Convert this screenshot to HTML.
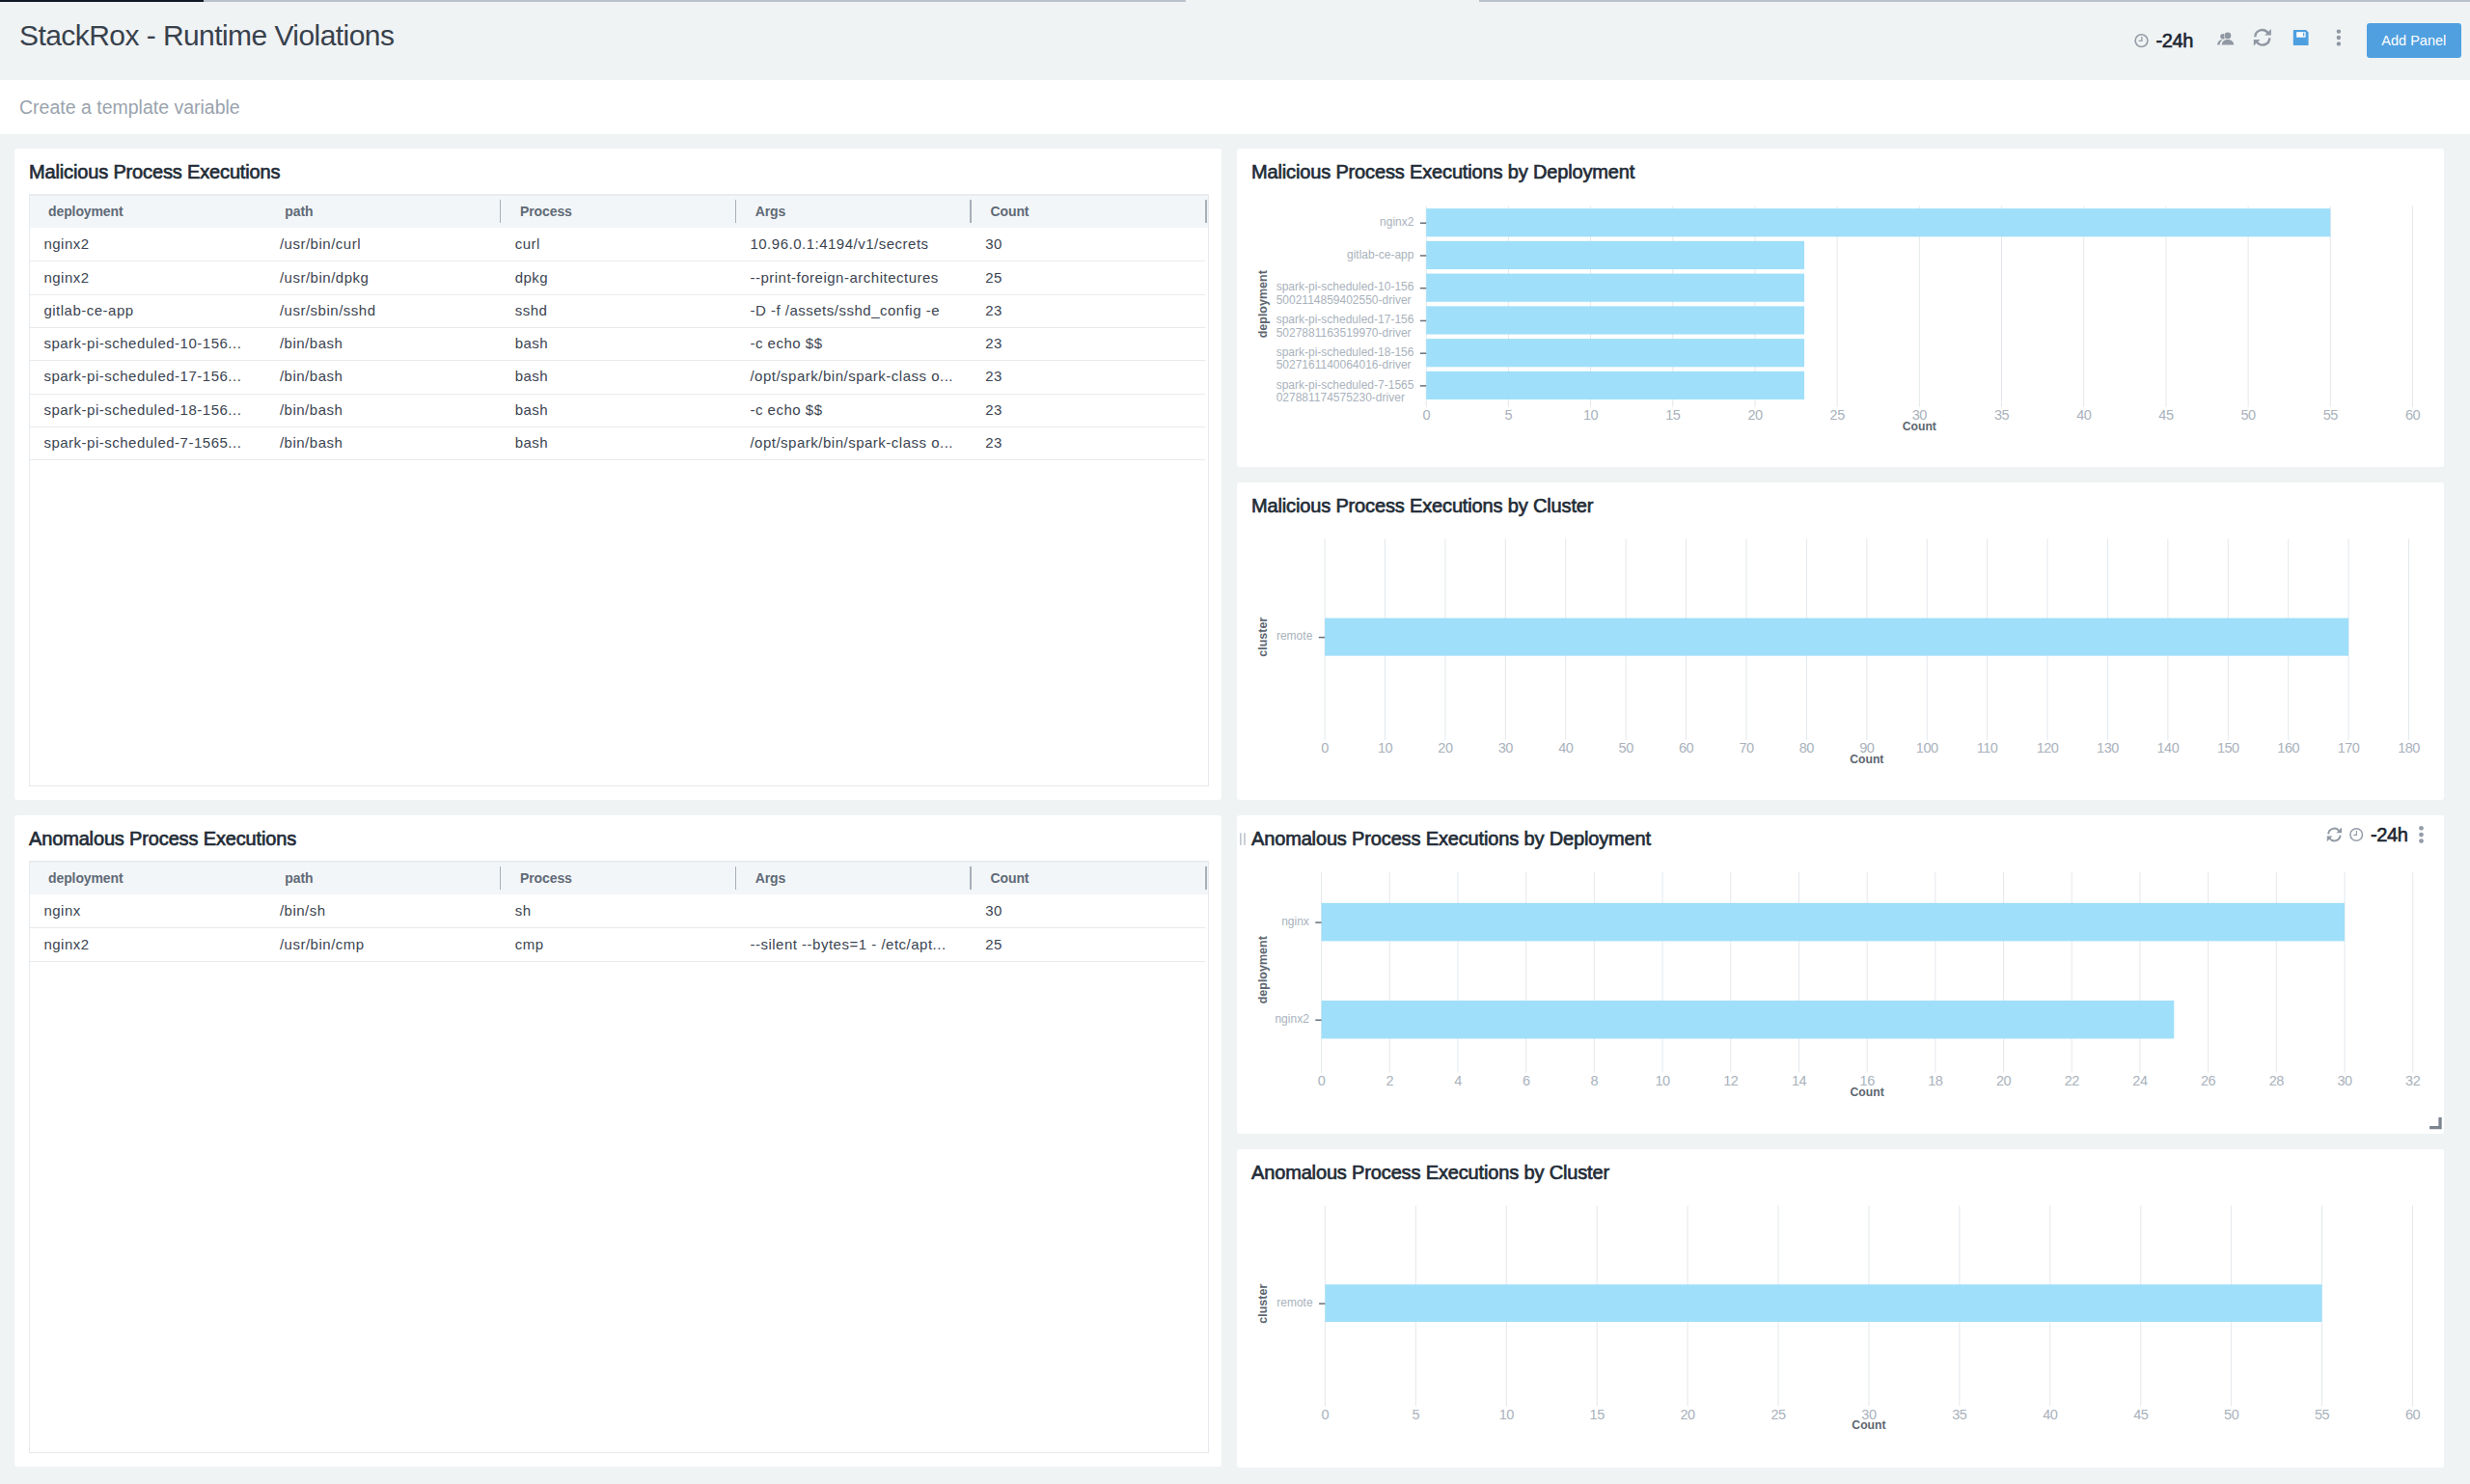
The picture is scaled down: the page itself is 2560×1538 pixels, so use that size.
<!DOCTYPE html><html><head><meta charset="utf-8"><style>
html,body{margin:0;padding:0;width:2560px;height:1538px;overflow:hidden;background:#f0f3f4;font-family:"Liberation Sans", sans-serif;}
.t{position:absolute;white-space:nowrap;line-height:1;}
.r{position:absolute;}
svg{position:absolute;left:0;top:0;}
</style></head><body>
<div class="r" style="left:0.00px;top:0.00px;width:211.00px;height:2.00px;background:#0f1a26;"></div>
<div class="r" style="left:211.00px;top:0.00px;width:1018.00px;height:2.00px;background:#b9c2cc;"></div>
<div class="r" style="left:1533.00px;top:0.00px;width:1027.00px;height:2.00px;background:#b9c2cc;"></div>
<div class="t" style="top:22.20px;font-size:30px;color:#38414c;letter-spacing:-0.56px;left:20.00px;">StackRox - Runtime Violations</div>
<div class="r" style="left:0.00px;top:83.00px;width:2560.00px;height:56.00px;background:#ffffff;"></div>
<div class="t" style="top:102.19px;font-size:19.5px;color:#9aa3ad;left:20.00px;">Create a template variable</div>
<div class="t" style="top:32.07px;font-size:20px;color:#1b2430;-webkit-text-stroke:0.6px #1b2430;letter-spacing:-0.4px;left:2234.50px;">-24h</div>
<svg width="2560" height="83" viewBox="0 0 2560 83">
<g fill="none" stroke="#959da8">
<circle cx="2219.5" cy="42.1" r="6.4" stroke-width="1.6"/>
<path d="M2219.9 38 V42.4 H2216.6" stroke-width="1.3"/>
</g>
<g fill="#8f98a3">
<circle cx="2304.0" cy="37.8" r="2.8"/>
<path d="M2297.9 46.6 C2298.4 43.5 2300 41.6 2302.6 41.3 L2303.6 41.3 C2301.6 42.8 2300.8 44.6 2300.6 46.6 Z"/>
<g stroke="#f0f3f4" stroke-width="1.1" style="paint-order:stroke">
<circle cx="2308.9" cy="36.9" r="3.4"/>
<path d="M2302.7 46.6 C2302.9 43.2 2305.2 41.1 2308.9 41.1 C2312.6 41.1 2315 43.2 2315.2 46.6 Z"/>
</g>
</g>
<g fill="none" stroke="#8f98a3" stroke-width="2.4">
<path d="M2337.3 38.2 A7.3 7.3 0 0 1 2350.6 34.2"/>
<path d="M2352.3 39.4 A7.3 7.3 0 0 1 2339.0 43.4"/>
</g>
<g fill="#8f98a3">
<path d="M2353.9 30 V36.6 H2347.3 Z"/>
<path d="M2335.8 47.6 V41 H2342.4 Z"/>
</g>
<path d="M2377.6 31 H2390 L2392.6 33.6 V46.3 Q2392.6 46.9 2392 46.9 H2377.4 Q2376.8 46.9 2376.8 46.3 V31.8 Q2376.8 31 2377.6 31 Z" fill="#4d9fe0"/>
<rect x="2380.2" y="33.2" width="9.4" height="5.5" fill="#ffffff"/>
<rect x="2387.1" y="33.9" width="1.2" height="3.6" fill="#4d9fe0"/>
<g fill="#8f98a3">
<circle cx="2423.9" cy="32.6" r="2.2"/>
<circle cx="2423.9" cy="39.0" r="2.2"/>
<circle cx="2423.9" cy="45.4" r="2.2"/>
</g>
</svg>
<div class="r" style="left:2452.80px;top:24.30px;width:98.00px;height:35.30px;background:#50a0e0;border-radius:3px;"></div>
<div class="t" style="top:35.12px;font-size:14.5px;color:#ffffff;left:2452.80px;width:98px;text-align:center;">Add Panel</div>
<div class="r" style="left:15.00px;top:154.00px;width:1251.00px;height:675.00px;background:#ffffff;border-radius:3px;"></div>
<div class="r" style="left:15.00px;top:845.00px;width:1251.00px;height:674.50px;background:#ffffff;border-radius:3px;"></div>
<div class="r" style="left:1282.00px;top:154.00px;width:1251.00px;height:330.00px;background:#ffffff;border-radius:3px;"></div>
<div class="r" style="left:1282.00px;top:500.00px;width:1251.00px;height:329.00px;background:#ffffff;border-radius:3px;"></div>
<div class="r" style="left:1282.00px;top:845.00px;width:1251.00px;height:330.00px;background:#ffffff;border-radius:3px;"></div>
<div class="r" style="left:1282.00px;top:1190.50px;width:1251.00px;height:330.00px;background:#ffffff;border-radius:3px;"></div>
<div class="t" style="top:168.07px;font-size:20px;color:#222b36;-webkit-text-stroke:0.65px #222b36;letter-spacing:-0.15px;left:30.00px;">Malicious Process Executions</div>
<div class="t" style="top:859.07px;font-size:20px;color:#222b36;-webkit-text-stroke:0.65px #222b36;letter-spacing:-0.15px;left:30.00px;">Anomalous Process Executions</div>
<div class="t" style="top:168.07px;font-size:20px;color:#222b36;-webkit-text-stroke:0.65px #222b36;letter-spacing:-0.15px;left:1297.00px;">Malicious Process Executions by Deployment</div>
<div class="t" style="top:514.07px;font-size:20px;color:#222b36;-webkit-text-stroke:0.65px #222b36;letter-spacing:-0.15px;left:1297.00px;">Malicious Process Executions by Cluster</div>
<div class="t" style="top:859.07px;font-size:20px;color:#222b36;-webkit-text-stroke:0.65px #222b36;letter-spacing:-0.15px;left:1297.00px;">Anomalous Process Executions by Deployment</div>
<div class="t" style="top:1204.57px;font-size:20px;color:#222b36;-webkit-text-stroke:0.65px #222b36;letter-spacing:-0.15px;left:1297.00px;">Anomalous Process Executions by Cluster</div>
<div class="r" style="left:30px;top:200.70px;width:1220.5px;height:611.50px;border:1px solid #e6e9ed;border-top:2px solid #e9ecef;"></div>
<div class="r" style="left:31.00px;top:202.70px;width:1220.50px;height:33.80px;background:#f3f6f8;"></div>
<div class="t" style="top:212.25px;font-size:14px;color:#5f6a77;font-weight:700;letter-spacing:-0.1px;left:50.00px;">deployment</div>
<div class="t" style="top:212.25px;font-size:14px;color:#5f6a77;font-weight:700;letter-spacing:-0.1px;left:295.25px;">path</div>
<div class="t" style="top:212.25px;font-size:14px;color:#5f6a77;font-weight:700;letter-spacing:-0.1px;left:539.00px;">Process</div>
<div class="t" style="top:212.25px;font-size:14px;color:#5f6a77;font-weight:700;letter-spacing:-0.1px;left:782.75px;">Args</div>
<div class="t" style="top:212.25px;font-size:14px;color:#5f6a77;font-weight:700;letter-spacing:-0.1px;left:1026.50px;">Count</div>
<div class="r" style="left:517.80px;top:207.10px;width:1.60px;height:23.50px;background:#a7afb8;"></div>
<div class="r" style="left:761.55px;top:207.10px;width:1.60px;height:23.50px;background:#a7afb8;"></div>
<div class="r" style="left:1005.30px;top:207.10px;width:1.60px;height:23.50px;background:#a7afb8;"></div>
<div class="r" style="left:1249.05px;top:207.10px;width:1.60px;height:23.50px;background:#a7afb8;"></div>
<div class="t" style="top:245.20px;font-size:15px;color:#3b4451;letter-spacing:0.5px;left:45.40px;">nginx2</div>
<div class="t" style="top:245.20px;font-size:15px;color:#3b4451;letter-spacing:0.5px;left:289.95px;">/usr/bin/curl</div>
<div class="t" style="top:245.20px;font-size:15px;color:#3b4451;letter-spacing:0.5px;left:533.70px;">curl</div>
<div class="t" style="top:245.20px;font-size:15px;color:#3b4451;letter-spacing:0.5px;left:777.45px;">10.96.0.1:4194/v1/secrets</div>
<div class="t" style="top:245.20px;font-size:15px;color:#3b4451;letter-spacing:0.5px;left:1021.20px;">30</div>
<div class="r" style="left:31.00px;top:270.30px;width:1218.00px;height:1.20px;background:#e8ebee;"></div>
<div class="t" style="top:279.50px;font-size:15px;color:#3b4451;letter-spacing:0.5px;left:45.40px;">nginx2</div>
<div class="t" style="top:279.50px;font-size:15px;color:#3b4451;letter-spacing:0.5px;left:289.95px;">/usr/bin/dpkg</div>
<div class="t" style="top:279.50px;font-size:15px;color:#3b4451;letter-spacing:0.5px;left:533.70px;">dpkg</div>
<div class="t" style="top:279.50px;font-size:15px;color:#3b4451;letter-spacing:0.5px;left:777.45px;">--print-foreign-architectures</div>
<div class="t" style="top:279.50px;font-size:15px;color:#3b4451;letter-spacing:0.5px;left:1021.20px;">25</div>
<div class="r" style="left:31.00px;top:304.60px;width:1218.00px;height:1.20px;background:#e8ebee;"></div>
<div class="t" style="top:313.80px;font-size:15px;color:#3b4451;letter-spacing:0.5px;left:45.40px;">gitlab-ce-app</div>
<div class="t" style="top:313.80px;font-size:15px;color:#3b4451;letter-spacing:0.5px;left:289.95px;">/usr/sbin/sshd</div>
<div class="t" style="top:313.80px;font-size:15px;color:#3b4451;letter-spacing:0.5px;left:533.70px;">sshd</div>
<div class="t" style="top:313.80px;font-size:15px;color:#3b4451;letter-spacing:0.5px;left:777.45px;">-D -f /assets/sshd_config -e</div>
<div class="t" style="top:313.80px;font-size:15px;color:#3b4451;letter-spacing:0.5px;left:1021.20px;">23</div>
<div class="r" style="left:31.00px;top:338.90px;width:1218.00px;height:1.20px;background:#e8ebee;"></div>
<div class="t" style="top:348.10px;font-size:15px;color:#3b4451;letter-spacing:0.5px;left:45.40px;">spark-pi-scheduled-10-156...</div>
<div class="t" style="top:348.10px;font-size:15px;color:#3b4451;letter-spacing:0.5px;left:289.95px;">/bin/bash</div>
<div class="t" style="top:348.10px;font-size:15px;color:#3b4451;letter-spacing:0.5px;left:533.70px;">bash</div>
<div class="t" style="top:348.10px;font-size:15px;color:#3b4451;letter-spacing:0.5px;left:777.45px;">-c echo $$</div>
<div class="t" style="top:348.10px;font-size:15px;color:#3b4451;letter-spacing:0.5px;left:1021.20px;">23</div>
<div class="r" style="left:31.00px;top:373.20px;width:1218.00px;height:1.20px;background:#e8ebee;"></div>
<div class="t" style="top:382.40px;font-size:15px;color:#3b4451;letter-spacing:0.5px;left:45.40px;">spark-pi-scheduled-17-156...</div>
<div class="t" style="top:382.40px;font-size:15px;color:#3b4451;letter-spacing:0.5px;left:289.95px;">/bin/bash</div>
<div class="t" style="top:382.40px;font-size:15px;color:#3b4451;letter-spacing:0.5px;left:533.70px;">bash</div>
<div class="t" style="top:382.40px;font-size:15px;color:#3b4451;letter-spacing:0.5px;left:777.45px;">/opt/spark/bin/spark-class o...</div>
<div class="t" style="top:382.40px;font-size:15px;color:#3b4451;letter-spacing:0.5px;left:1021.20px;">23</div>
<div class="r" style="left:31.00px;top:407.50px;width:1218.00px;height:1.20px;background:#e8ebee;"></div>
<div class="t" style="top:416.70px;font-size:15px;color:#3b4451;letter-spacing:0.5px;left:45.40px;">spark-pi-scheduled-18-156...</div>
<div class="t" style="top:416.70px;font-size:15px;color:#3b4451;letter-spacing:0.5px;left:289.95px;">/bin/bash</div>
<div class="t" style="top:416.70px;font-size:15px;color:#3b4451;letter-spacing:0.5px;left:533.70px;">bash</div>
<div class="t" style="top:416.70px;font-size:15px;color:#3b4451;letter-spacing:0.5px;left:777.45px;">-c echo $$</div>
<div class="t" style="top:416.70px;font-size:15px;color:#3b4451;letter-spacing:0.5px;left:1021.20px;">23</div>
<div class="r" style="left:31.00px;top:441.80px;width:1218.00px;height:1.20px;background:#e8ebee;"></div>
<div class="t" style="top:451.00px;font-size:15px;color:#3b4451;letter-spacing:0.5px;left:45.40px;">spark-pi-scheduled-7-1565...</div>
<div class="t" style="top:451.00px;font-size:15px;color:#3b4451;letter-spacing:0.5px;left:289.95px;">/bin/bash</div>
<div class="t" style="top:451.00px;font-size:15px;color:#3b4451;letter-spacing:0.5px;left:533.70px;">bash</div>
<div class="t" style="top:451.00px;font-size:15px;color:#3b4451;letter-spacing:0.5px;left:777.45px;">/opt/spark/bin/spark-class o...</div>
<div class="t" style="top:451.00px;font-size:15px;color:#3b4451;letter-spacing:0.5px;left:1021.20px;">23</div>
<div class="r" style="left:31.00px;top:476.10px;width:1218.00px;height:1.20px;background:#e8ebee;"></div>
<div class="r" style="left:30px;top:891.70px;width:1220.5px;height:611.10px;border:1px solid #e6e9ed;border-top:2px solid #e9ecef;"></div>
<div class="r" style="left:31.00px;top:893.70px;width:1220.50px;height:33.80px;background:#f3f6f8;"></div>
<div class="t" style="top:903.25px;font-size:14px;color:#5f6a77;font-weight:700;letter-spacing:-0.1px;left:50.00px;">deployment</div>
<div class="t" style="top:903.25px;font-size:14px;color:#5f6a77;font-weight:700;letter-spacing:-0.1px;left:295.25px;">path</div>
<div class="t" style="top:903.25px;font-size:14px;color:#5f6a77;font-weight:700;letter-spacing:-0.1px;left:539.00px;">Process</div>
<div class="t" style="top:903.25px;font-size:14px;color:#5f6a77;font-weight:700;letter-spacing:-0.1px;left:782.75px;">Args</div>
<div class="t" style="top:903.25px;font-size:14px;color:#5f6a77;font-weight:700;letter-spacing:-0.1px;left:1026.50px;">Count</div>
<div class="r" style="left:517.80px;top:898.10px;width:1.60px;height:23.50px;background:#a7afb8;"></div>
<div class="r" style="left:761.55px;top:898.10px;width:1.60px;height:23.50px;background:#a7afb8;"></div>
<div class="r" style="left:1005.30px;top:898.10px;width:1.60px;height:23.50px;background:#a7afb8;"></div>
<div class="r" style="left:1249.05px;top:898.10px;width:1.60px;height:23.50px;background:#a7afb8;"></div>
<div class="t" style="top:936.20px;font-size:15px;color:#3b4451;letter-spacing:0.5px;left:45.40px;">nginx</div>
<div class="t" style="top:936.20px;font-size:15px;color:#3b4451;letter-spacing:0.5px;left:289.95px;">/bin/sh</div>
<div class="t" style="top:936.20px;font-size:15px;color:#3b4451;letter-spacing:0.5px;left:533.70px;">sh</div>
<div class="t" style="top:936.20px;font-size:15px;color:#3b4451;letter-spacing:0.5px;left:777.45px;"></div>
<div class="t" style="top:936.20px;font-size:15px;color:#3b4451;letter-spacing:0.5px;left:1021.20px;">30</div>
<div class="r" style="left:31.00px;top:961.30px;width:1218.00px;height:1.20px;background:#e8ebee;"></div>
<div class="t" style="top:970.50px;font-size:15px;color:#3b4451;letter-spacing:0.5px;left:45.40px;">nginx2</div>
<div class="t" style="top:970.50px;font-size:15px;color:#3b4451;letter-spacing:0.5px;left:289.95px;">/usr/bin/cmp</div>
<div class="t" style="top:970.50px;font-size:15px;color:#3b4451;letter-spacing:0.5px;left:533.70px;">cmp</div>
<div class="t" style="top:970.50px;font-size:15px;color:#3b4451;letter-spacing:0.5px;left:777.45px;">--silent --bytes=1 - /etc/apt...</div>
<div class="t" style="top:970.50px;font-size:15px;color:#3b4451;letter-spacing:0.5px;left:1021.20px;">25</div>
<div class="r" style="left:31.00px;top:995.60px;width:1218.00px;height:1.20px;background:#e8ebee;"></div>
<div class="t" style="right:1094.60px;top:223.84px;font-size:12px;line-height:13.6px;color:#a9b2bc;text-align:left;">nginx2</div>
<div class="t" style="right:1094.60px;top:257.59px;font-size:12px;line-height:13.6px;color:#a9b2bc;text-align:left;">gitlab-ce-app</div>
<div class="t" style="right:1094.60px;top:291.34px;font-size:12px;line-height:13.6px;color:#a9b2bc;text-align:left;">spark-pi-scheduled-10-156<br>5002114859402550-driver</div>
<div class="t" style="right:1094.60px;top:325.09px;font-size:12px;line-height:13.6px;color:#a9b2bc;text-align:left;">spark-pi-scheduled-17-156<br>5027881163519970-driver</div>
<div class="t" style="right:1094.60px;top:358.84px;font-size:12px;line-height:13.6px;color:#a9b2bc;text-align:left;">spark-pi-scheduled-18-156<br>5027161140064016-driver</div>
<div class="t" style="right:1094.60px;top:392.54px;font-size:12px;line-height:13.6px;color:#a9b2bc;text-align:left;">spark-pi-scheduled-7-1565<br>027881174575230-driver</div>
<div class="t" style="top:423.12px;font-size:14.5px;color:#a9b2bc;letter-spacing:-0.5px;left:1448.20px;width:60px;text-align:center;">0</div>
<div class="t" style="top:423.12px;font-size:14.5px;color:#a9b2bc;letter-spacing:-0.5px;left:1533.39px;width:60px;text-align:center;">5</div>
<div class="t" style="top:423.12px;font-size:14.5px;color:#a9b2bc;letter-spacing:-0.5px;left:1618.58px;width:60px;text-align:center;">10</div>
<div class="t" style="top:423.12px;font-size:14.5px;color:#a9b2bc;letter-spacing:-0.5px;left:1703.78px;width:60px;text-align:center;">15</div>
<div class="t" style="top:423.12px;font-size:14.5px;color:#a9b2bc;letter-spacing:-0.5px;left:1788.97px;width:60px;text-align:center;">20</div>
<div class="t" style="top:423.12px;font-size:14.5px;color:#a9b2bc;letter-spacing:-0.5px;left:1874.16px;width:60px;text-align:center;">25</div>
<div class="t" style="top:423.12px;font-size:14.5px;color:#a9b2bc;letter-spacing:-0.5px;left:1959.35px;width:60px;text-align:center;">30</div>
<div class="t" style="top:423.12px;font-size:14.5px;color:#a9b2bc;letter-spacing:-0.5px;left:2044.54px;width:60px;text-align:center;">35</div>
<div class="t" style="top:423.12px;font-size:14.5px;color:#a9b2bc;letter-spacing:-0.5px;left:2129.73px;width:60px;text-align:center;">40</div>
<div class="t" style="top:423.12px;font-size:14.5px;color:#a9b2bc;letter-spacing:-0.5px;left:2214.93px;width:60px;text-align:center;">45</div>
<div class="t" style="top:423.12px;font-size:14.5px;color:#a9b2bc;letter-spacing:-0.5px;left:2300.12px;width:60px;text-align:center;">50</div>
<div class="t" style="top:423.12px;font-size:14.5px;color:#a9b2bc;letter-spacing:-0.5px;left:2385.31px;width:60px;text-align:center;">55</div>
<div class="t" style="top:423.12px;font-size:14.5px;color:#a9b2bc;letter-spacing:-0.5px;left:2470.50px;width:60px;text-align:center;">60</div>
<div class="t" style="top:435.87px;font-size:12.2px;color:#5d6670;font-weight:700;left:1939.35px;width:100px;text-align:center;">Count</div>
<div class="t" style="left:1249.20px;top:309.00px;width:120px;text-align:center;font-size:12.5px;font-weight:700;color:#5d6670;transform:rotate(-90deg);transform-origin:60px 6.25px;">deployment</div>
<div class="t" style="right:1199.70px;top:653.24px;font-size:12px;line-height:13.6px;color:#a9b2bc;text-align:left;">remote</div>
<div class="t" style="top:768.22px;font-size:14.5px;color:#a9b2bc;letter-spacing:-0.5px;left:1343.10px;width:60px;text-align:center;">0</div>
<div class="t" style="top:768.22px;font-size:14.5px;color:#a9b2bc;letter-spacing:-0.5px;left:1405.51px;width:60px;text-align:center;">10</div>
<div class="t" style="top:768.22px;font-size:14.5px;color:#a9b2bc;letter-spacing:-0.5px;left:1467.92px;width:60px;text-align:center;">20</div>
<div class="t" style="top:768.22px;font-size:14.5px;color:#a9b2bc;letter-spacing:-0.5px;left:1530.33px;width:60px;text-align:center;">30</div>
<div class="t" style="top:768.22px;font-size:14.5px;color:#a9b2bc;letter-spacing:-0.5px;left:1592.74px;width:60px;text-align:center;">40</div>
<div class="t" style="top:768.22px;font-size:14.5px;color:#a9b2bc;letter-spacing:-0.5px;left:1655.16px;width:60px;text-align:center;">50</div>
<div class="t" style="top:768.22px;font-size:14.5px;color:#a9b2bc;letter-spacing:-0.5px;left:1717.57px;width:60px;text-align:center;">60</div>
<div class="t" style="top:768.22px;font-size:14.5px;color:#a9b2bc;letter-spacing:-0.5px;left:1779.98px;width:60px;text-align:center;">70</div>
<div class="t" style="top:768.22px;font-size:14.5px;color:#a9b2bc;letter-spacing:-0.5px;left:1842.39px;width:60px;text-align:center;">80</div>
<div class="t" style="top:768.22px;font-size:14.5px;color:#a9b2bc;letter-spacing:-0.5px;left:1904.80px;width:60px;text-align:center;">90</div>
<div class="t" style="top:768.22px;font-size:14.5px;color:#a9b2bc;letter-spacing:-0.5px;left:1967.21px;width:60px;text-align:center;">100</div>
<div class="t" style="top:768.22px;font-size:14.5px;color:#a9b2bc;letter-spacing:-0.5px;left:2029.62px;width:60px;text-align:center;">110</div>
<div class="t" style="top:768.22px;font-size:14.5px;color:#a9b2bc;letter-spacing:-0.5px;left:2092.03px;width:60px;text-align:center;">120</div>
<div class="t" style="top:768.22px;font-size:14.5px;color:#a9b2bc;letter-spacing:-0.5px;left:2154.44px;width:60px;text-align:center;">130</div>
<div class="t" style="top:768.22px;font-size:14.5px;color:#a9b2bc;letter-spacing:-0.5px;left:2216.86px;width:60px;text-align:center;">140</div>
<div class="t" style="top:768.22px;font-size:14.5px;color:#a9b2bc;letter-spacing:-0.5px;left:2279.27px;width:60px;text-align:center;">150</div>
<div class="t" style="top:768.22px;font-size:14.5px;color:#a9b2bc;letter-spacing:-0.5px;left:2341.68px;width:60px;text-align:center;">160</div>
<div class="t" style="top:768.22px;font-size:14.5px;color:#a9b2bc;letter-spacing:-0.5px;left:2404.09px;width:60px;text-align:center;">170</div>
<div class="t" style="top:768.22px;font-size:14.5px;color:#a9b2bc;letter-spacing:-0.5px;left:2466.50px;width:60px;text-align:center;">180</div>
<div class="t" style="top:780.97px;font-size:12.2px;color:#5d6670;font-weight:700;left:1884.80px;width:100px;text-align:center;">Count</div>
<div class="t" style="left:1249.20px;top:653.95px;width:120px;text-align:center;font-size:12.5px;font-weight:700;color:#5d6670;transform:rotate(-90deg);transform-origin:60px 6.25px;">cluster</div>
<div class="t" style="right:1203.20px;top:948.74px;font-size:12px;line-height:13.6px;color:#a9b2bc;text-align:left;">nginx</div>
<div class="t" style="right:1203.20px;top:1049.84px;font-size:12px;line-height:13.6px;color:#a9b2bc;text-align:left;">nginx2</div>
<div class="t" style="top:1112.82px;font-size:14.5px;color:#a9b2bc;letter-spacing:-0.5px;left:1339.60px;width:60px;text-align:center;">0</div>
<div class="t" style="top:1112.82px;font-size:14.5px;color:#a9b2bc;letter-spacing:-0.5px;left:1410.29px;width:60px;text-align:center;">2</div>
<div class="t" style="top:1112.82px;font-size:14.5px;color:#a9b2bc;letter-spacing:-0.5px;left:1480.99px;width:60px;text-align:center;">4</div>
<div class="t" style="top:1112.82px;font-size:14.5px;color:#a9b2bc;letter-spacing:-0.5px;left:1551.68px;width:60px;text-align:center;">6</div>
<div class="t" style="top:1112.82px;font-size:14.5px;color:#a9b2bc;letter-spacing:-0.5px;left:1622.38px;width:60px;text-align:center;">8</div>
<div class="t" style="top:1112.82px;font-size:14.5px;color:#a9b2bc;letter-spacing:-0.5px;left:1693.07px;width:60px;text-align:center;">10</div>
<div class="t" style="top:1112.82px;font-size:14.5px;color:#a9b2bc;letter-spacing:-0.5px;left:1763.76px;width:60px;text-align:center;">12</div>
<div class="t" style="top:1112.82px;font-size:14.5px;color:#a9b2bc;letter-spacing:-0.5px;left:1834.46px;width:60px;text-align:center;">14</div>
<div class="t" style="top:1112.82px;font-size:14.5px;color:#a9b2bc;letter-spacing:-0.5px;left:1905.15px;width:60px;text-align:center;">16</div>
<div class="t" style="top:1112.82px;font-size:14.5px;color:#a9b2bc;letter-spacing:-0.5px;left:1975.84px;width:60px;text-align:center;">18</div>
<div class="t" style="top:1112.82px;font-size:14.5px;color:#a9b2bc;letter-spacing:-0.5px;left:2046.54px;width:60px;text-align:center;">20</div>
<div class="t" style="top:1112.82px;font-size:14.5px;color:#a9b2bc;letter-spacing:-0.5px;left:2117.23px;width:60px;text-align:center;">22</div>
<div class="t" style="top:1112.82px;font-size:14.5px;color:#a9b2bc;letter-spacing:-0.5px;left:2187.92px;width:60px;text-align:center;">24</div>
<div class="t" style="top:1112.82px;font-size:14.5px;color:#a9b2bc;letter-spacing:-0.5px;left:2258.62px;width:60px;text-align:center;">26</div>
<div class="t" style="top:1112.82px;font-size:14.5px;color:#a9b2bc;letter-spacing:-0.5px;left:2329.31px;width:60px;text-align:center;">28</div>
<div class="t" style="top:1112.82px;font-size:14.5px;color:#a9b2bc;letter-spacing:-0.5px;left:2400.01px;width:60px;text-align:center;">30</div>
<div class="t" style="top:1112.82px;font-size:14.5px;color:#a9b2bc;letter-spacing:-0.5px;left:2470.70px;width:60px;text-align:center;">32</div>
<div class="t" style="top:1125.57px;font-size:12.2px;color:#5d6670;font-weight:700;left:1885.15px;width:100px;text-align:center;">Count</div>
<div class="t" style="left:1249.20px;top:999.10px;width:120px;text-align:center;font-size:12.5px;font-weight:700;color:#5d6670;transform:rotate(-90deg);transform-origin:60px 6.25px;">deployment</div>
<div class="t" style="right:1199.40px;top:1343.74px;font-size:12px;line-height:13.6px;color:#a9b2bc;text-align:left;">remote</div>
<div class="t" style="top:1458.72px;font-size:14.5px;color:#a9b2bc;letter-spacing:-0.5px;left:1343.40px;width:60px;text-align:center;">0</div>
<div class="t" style="top:1458.72px;font-size:14.5px;color:#a9b2bc;letter-spacing:-0.5px;left:1437.33px;width:60px;text-align:center;">5</div>
<div class="t" style="top:1458.72px;font-size:14.5px;color:#a9b2bc;letter-spacing:-0.5px;left:1531.25px;width:60px;text-align:center;">10</div>
<div class="t" style="top:1458.72px;font-size:14.5px;color:#a9b2bc;letter-spacing:-0.5px;left:1625.18px;width:60px;text-align:center;">15</div>
<div class="t" style="top:1458.72px;font-size:14.5px;color:#a9b2bc;letter-spacing:-0.5px;left:1719.10px;width:60px;text-align:center;">20</div>
<div class="t" style="top:1458.72px;font-size:14.5px;color:#a9b2bc;letter-spacing:-0.5px;left:1813.03px;width:60px;text-align:center;">25</div>
<div class="t" style="top:1458.72px;font-size:14.5px;color:#a9b2bc;letter-spacing:-0.5px;left:1906.95px;width:60px;text-align:center;">30</div>
<div class="t" style="top:1458.72px;font-size:14.5px;color:#a9b2bc;letter-spacing:-0.5px;left:2000.88px;width:60px;text-align:center;">35</div>
<div class="t" style="top:1458.72px;font-size:14.5px;color:#a9b2bc;letter-spacing:-0.5px;left:2094.80px;width:60px;text-align:center;">40</div>
<div class="t" style="top:1458.72px;font-size:14.5px;color:#a9b2bc;letter-spacing:-0.5px;left:2188.72px;width:60px;text-align:center;">45</div>
<div class="t" style="top:1458.72px;font-size:14.5px;color:#a9b2bc;letter-spacing:-0.5px;left:2282.65px;width:60px;text-align:center;">50</div>
<div class="t" style="top:1458.72px;font-size:14.5px;color:#a9b2bc;letter-spacing:-0.5px;left:2376.57px;width:60px;text-align:center;">55</div>
<div class="t" style="top:1458.72px;font-size:14.5px;color:#a9b2bc;letter-spacing:-0.5px;left:2470.50px;width:60px;text-align:center;">60</div>
<div class="t" style="top:1471.47px;font-size:12.2px;color:#5d6670;font-weight:700;left:1886.95px;width:100px;text-align:center;">Count</div>
<div class="t" style="left:1249.20px;top:1344.80px;width:120px;text-align:center;font-size:12.5px;font-weight:700;color:#5d6670;transform:rotate(-90deg);transform-origin:60px 6.25px;">cluster</div>
<div class="t" style="top:855.27px;font-size:20px;color:#1b2430;-webkit-text-stroke:0.6px #1b2430;letter-spacing:-0.4px;left:2457.10px;">-24h</div>
<svg width="2560" height="1538" viewBox="0 0 2560 1538">
<rect x="1477.70" y="213.60" width="1" height="208.30" fill="#e3e8ec"/>
<rect x="1562.89" y="213.60" width="1" height="208.30" fill="#e3e8ec"/>
<rect x="1648.08" y="213.60" width="1" height="208.30" fill="#e3e8ec"/>
<rect x="1733.28" y="213.60" width="1" height="208.30" fill="#e3e8ec"/>
<rect x="1818.47" y="213.60" width="1" height="208.30" fill="#e3e8ec"/>
<rect x="1903.66" y="213.60" width="1" height="208.30" fill="#e3e8ec"/>
<rect x="1988.85" y="213.60" width="1" height="208.30" fill="#e3e8ec"/>
<rect x="2074.04" y="213.60" width="1" height="208.30" fill="#e3e8ec"/>
<rect x="2159.23" y="213.60" width="1" height="208.30" fill="#e3e8ec"/>
<rect x="2244.43" y="213.60" width="1" height="208.30" fill="#e3e8ec"/>
<rect x="2329.62" y="213.60" width="1" height="208.30" fill="#e3e8ec"/>
<rect x="2414.81" y="213.60" width="1" height="208.30" fill="#e3e8ec"/>
<rect x="2500.00" y="213.60" width="1" height="208.30" fill="#e3e8ec"/>
<rect x="1478.20" y="216.10" width="937.11" height="29.20" fill="#9fdffa"/>
<rect x="1471.90" y="230.45" width="6.3" height="1.5" fill="#68717b"/>
<rect x="1478.20" y="249.85" width="391.88" height="29.20" fill="#9fdffa"/>
<rect x="1471.90" y="264.20" width="6.3" height="1.5" fill="#68717b"/>
<rect x="1478.20" y="283.60" width="391.88" height="29.20" fill="#9fdffa"/>
<rect x="1471.90" y="297.95" width="6.3" height="1.5" fill="#68717b"/>
<rect x="1478.20" y="317.35" width="391.88" height="29.20" fill="#9fdffa"/>
<rect x="1471.90" y="331.70" width="6.3" height="1.5" fill="#68717b"/>
<rect x="1478.20" y="351.10" width="391.88" height="29.20" fill="#9fdffa"/>
<rect x="1471.90" y="365.45" width="6.3" height="1.5" fill="#68717b"/>
<rect x="1478.20" y="384.80" width="391.88" height="29.20" fill="#9fdffa"/>
<rect x="1471.90" y="399.15" width="6.3" height="1.5" fill="#68717b"/>
<rect x="1372.60" y="558.40" width="1" height="208.60" fill="#e3e8ec"/>
<rect x="1435.01" y="558.40" width="1" height="208.60" fill="#e3e8ec"/>
<rect x="1497.42" y="558.40" width="1" height="208.60" fill="#e3e8ec"/>
<rect x="1559.83" y="558.40" width="1" height="208.60" fill="#e3e8ec"/>
<rect x="1622.24" y="558.40" width="1" height="208.60" fill="#e3e8ec"/>
<rect x="1684.66" y="558.40" width="1" height="208.60" fill="#e3e8ec"/>
<rect x="1747.07" y="558.40" width="1" height="208.60" fill="#e3e8ec"/>
<rect x="1809.48" y="558.40" width="1" height="208.60" fill="#e3e8ec"/>
<rect x="1871.89" y="558.40" width="1" height="208.60" fill="#e3e8ec"/>
<rect x="1934.30" y="558.40" width="1" height="208.60" fill="#e3e8ec"/>
<rect x="1996.71" y="558.40" width="1" height="208.60" fill="#e3e8ec"/>
<rect x="2059.12" y="558.40" width="1" height="208.60" fill="#e3e8ec"/>
<rect x="2121.53" y="558.40" width="1" height="208.60" fill="#e3e8ec"/>
<rect x="2183.94" y="558.40" width="1" height="208.60" fill="#e3e8ec"/>
<rect x="2246.36" y="558.40" width="1" height="208.60" fill="#e3e8ec"/>
<rect x="2308.77" y="558.40" width="1" height="208.60" fill="#e3e8ec"/>
<rect x="2371.18" y="558.40" width="1" height="208.60" fill="#e3e8ec"/>
<rect x="2433.59" y="558.40" width="1" height="208.60" fill="#e3e8ec"/>
<rect x="2496.00" y="558.40" width="1" height="208.60" fill="#e3e8ec"/>
<rect x="1373.10" y="640.55" width="1060.99" height="39.10" fill="#9fdffa"/>
<rect x="1366.80" y="659.85" width="6.3" height="1.5" fill="#68717b"/>
<rect x="1369.10" y="904.10" width="1" height="207.50" fill="#e3e8ec"/>
<rect x="1439.79" y="904.10" width="1" height="207.50" fill="#e3e8ec"/>
<rect x="1510.49" y="904.10" width="1" height="207.50" fill="#e3e8ec"/>
<rect x="1581.18" y="904.10" width="1" height="207.50" fill="#e3e8ec"/>
<rect x="1651.88" y="904.10" width="1" height="207.50" fill="#e3e8ec"/>
<rect x="1722.57" y="904.10" width="1" height="207.50" fill="#e3e8ec"/>
<rect x="1793.26" y="904.10" width="1" height="207.50" fill="#e3e8ec"/>
<rect x="1863.96" y="904.10" width="1" height="207.50" fill="#e3e8ec"/>
<rect x="1934.65" y="904.10" width="1" height="207.50" fill="#e3e8ec"/>
<rect x="2005.34" y="904.10" width="1" height="207.50" fill="#e3e8ec"/>
<rect x="2076.04" y="904.10" width="1" height="207.50" fill="#e3e8ec"/>
<rect x="2146.73" y="904.10" width="1" height="207.50" fill="#e3e8ec"/>
<rect x="2217.42" y="904.10" width="1" height="207.50" fill="#e3e8ec"/>
<rect x="2288.12" y="904.10" width="1" height="207.50" fill="#e3e8ec"/>
<rect x="2358.81" y="904.10" width="1" height="207.50" fill="#e3e8ec"/>
<rect x="2429.51" y="904.10" width="1" height="207.50" fill="#e3e8ec"/>
<rect x="2500.20" y="904.10" width="1" height="207.50" fill="#e3e8ec"/>
<rect x="1369.60" y="935.85" width="1060.41" height="39.50" fill="#9fdffa"/>
<rect x="1363.30" y="955.35" width="6.3" height="1.5" fill="#68717b"/>
<rect x="1369.60" y="1036.95" width="883.67" height="39.50" fill="#9fdffa"/>
<rect x="1363.30" y="1056.45" width="6.3" height="1.5" fill="#68717b"/>
<rect x="1372.90" y="1249.60" width="1" height="207.90" fill="#e3e8ec"/>
<rect x="1466.83" y="1249.60" width="1" height="207.90" fill="#e3e8ec"/>
<rect x="1560.75" y="1249.60" width="1" height="207.90" fill="#e3e8ec"/>
<rect x="1654.68" y="1249.60" width="1" height="207.90" fill="#e3e8ec"/>
<rect x="1748.60" y="1249.60" width="1" height="207.90" fill="#e3e8ec"/>
<rect x="1842.53" y="1249.60" width="1" height="207.90" fill="#e3e8ec"/>
<rect x="1936.45" y="1249.60" width="1" height="207.90" fill="#e3e8ec"/>
<rect x="2030.38" y="1249.60" width="1" height="207.90" fill="#e3e8ec"/>
<rect x="2124.30" y="1249.60" width="1" height="207.90" fill="#e3e8ec"/>
<rect x="2218.22" y="1249.60" width="1" height="207.90" fill="#e3e8ec"/>
<rect x="2312.15" y="1249.60" width="1" height="207.90" fill="#e3e8ec"/>
<rect x="2406.07" y="1249.60" width="1" height="207.90" fill="#e3e8ec"/>
<rect x="2500.00" y="1249.60" width="1" height="207.90" fill="#e3e8ec"/>
<rect x="1373.40" y="1331.20" width="1033.17" height="38.80" fill="#9fdffa"/>
<rect x="1367.10" y="1350.35" width="6.3" height="1.5" fill="#68717b"/>
<rect x="1285.1" y="863.3" width="1.5" height="12.6" fill="#b8c0c9"/><rect x="1289.2" y="863.3" width="1.5" height="12.6" fill="#b8c0c9"/>
<g fill="none" stroke="#8f98a3" stroke-width="1.9">
<path d="M2413.2 864.4 A6.2 6.2 0 0 1 2424.4 861.2"/>
<path d="M2425.6 865.6 A6.2 6.2 0 0 1 2414.4 868.8"/>
</g>
<g fill="#8f98a3">
<path d="M2427 857.6 V863.2 H2421.4 Z"/>
<path d="M2411.8 872.2 V866.6 H2417.4 Z"/>
</g>
<circle cx="2442.2" cy="865" r="6.3" fill="none" stroke="#959da8" stroke-width="1.5"/>
<path d="M2442.4 861.1 V865.3 H2439.3" fill="none" stroke="#959da8" stroke-width="1.2"/>
<g fill="#959da8"><circle cx="2509.5" cy="858.3" r="2.4"/><circle cx="2509.5" cy="865.1" r="2.4"/><circle cx="2509.5" cy="871.6" r="2.4"/></g>
<path d="M2527.4 1158 H2530.7 V1170.2 H2518.1 V1167 H2527.4 Z" fill="#7d8590"/>
</svg>
</body></html>
